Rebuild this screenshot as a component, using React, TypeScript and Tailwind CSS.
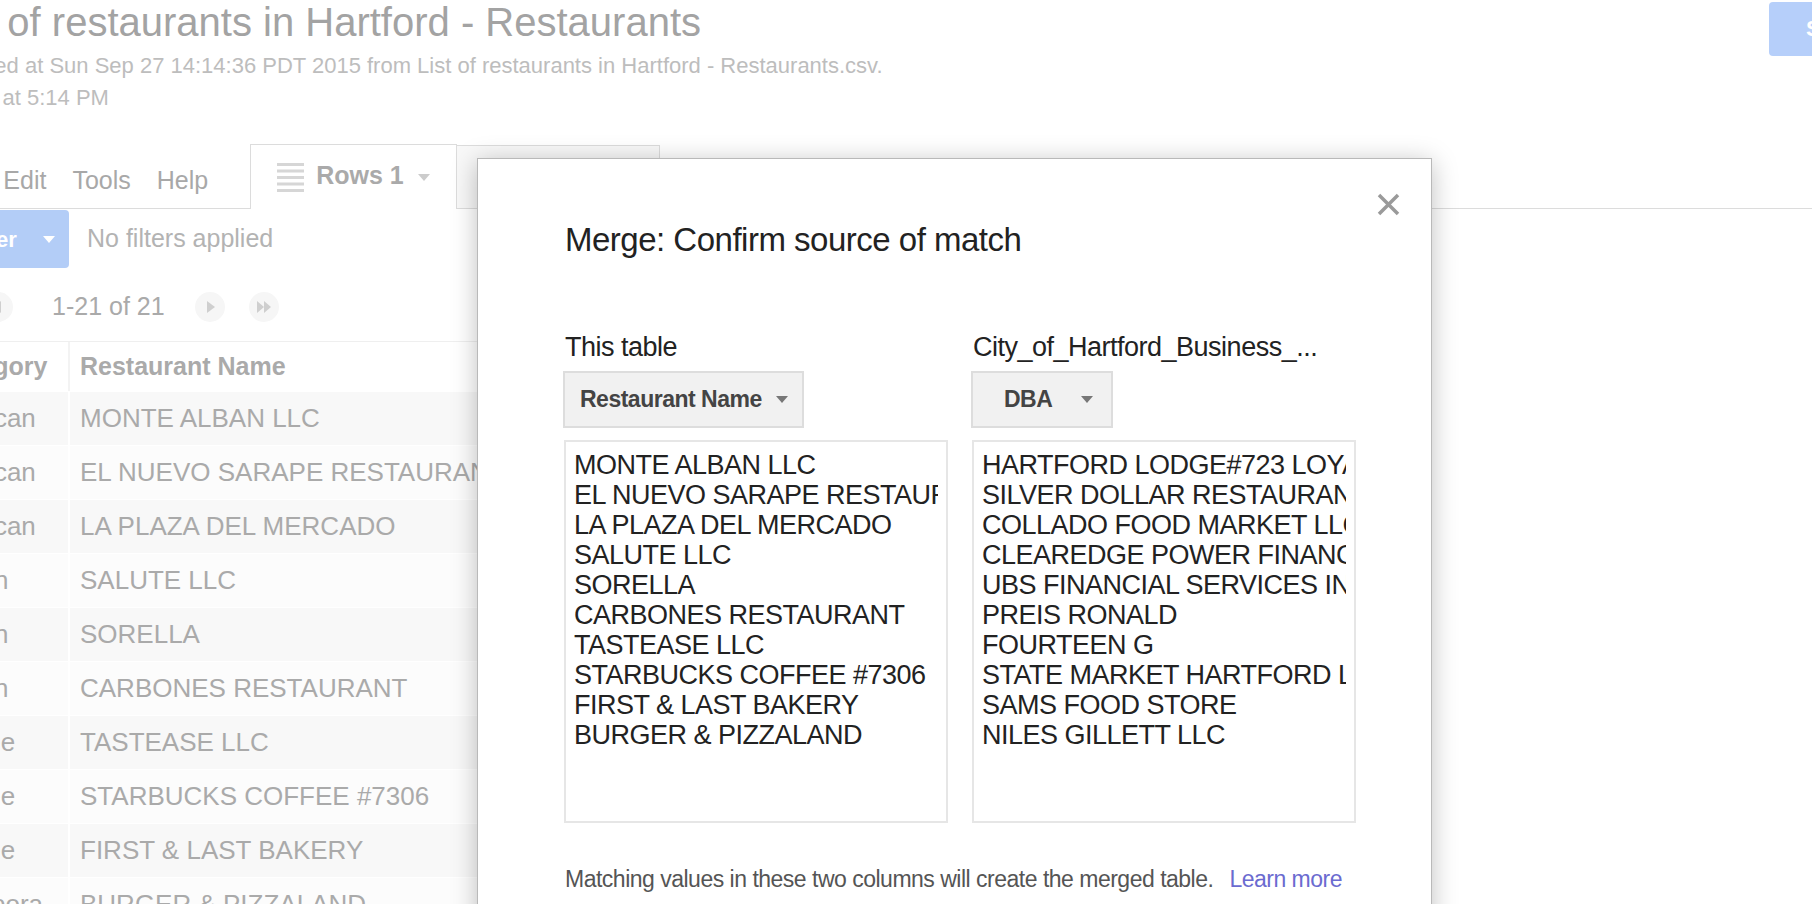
import React from 'react';

const tableRows = [
  ['Mexican', 'MONTE ALBAN LLC'],
  ['Mexican', 'EL NUEVO SARAPE RESTAURANT'],
  ['Mexican', 'LA PLAZA DEL MERCADO'],
  ['Italian', 'SALUTE LLC'],
  ['Italian', 'SORELLA'],
  ['Italian', 'CARBONES RESTAURANT'],
  ['Coffee', 'TASTEASE LLC'],
  ['Coffee', 'STARBUCKS COFFEE #7306'],
  ['Coffee', 'FIRST & LAST BAKERY'],
  ['Diaspora', 'BURGER & PIZZALAND'],
];

const leftValues = [
  'MONTE ALBAN LLC',
  'EL NUEVO SARAPE RESTAURANT',
  'LA PLAZA DEL MERCADO',
  'SALUTE LLC',
  'SORELLA',
  'CARBONES RESTAURANT',
  'TASTEASE LLC',
  'STARBUCKS COFFEE #7306',
  'FIRST & LAST BAKERY',
  'BURGER & PIZZALAND',
];

const rightValues = [
  'HARTFORD LODGE#723 LOYAL ORDER OF MOOSE',
  'SILVER DOLLAR RESTAURANT',
  'COLLADO FOOD MARKET LLC',
  'CLEAREDGE POWER FINANCE',
  'UBS FINANCIAL SERVICES INC',
  'PREIS RONALD',
  'FOURTEEN G',
  'STATE MARKET HARTFORD LLC',
  'SAMS FOOD STORE',
  'NILES GILLETT LLC',
];

function Caret({ color = '#777' }: { color?: string }) {
  return (
    <svg width="12" height="7" viewBox="0 0 12 7">
      <path d="M0 0 L12 0 L6 7 Z" fill={color} />
    </svg>
  );
}

function RowsIcon() {
  return (
    <svg width="27" height="29" viewBox="0 0 27 29">
      {[0, 6.5, 13, 19.5, 26].map((y) => (
        <rect key={y} x="0" y={y} width="27" height="3" fill="#d6d6d6" />
      ))}
    </svg>
  );
}

function PagerButton({ kind }: { kind: 'prev' | 'next' | 'last' }) {
  return (
    <div className="flex h-[30px] w-[30px] items-center justify-center rounded-full bg-[#f6f6f6]">
      <svg width="16" height="12" viewBox="0 0 16 12">
        {kind === 'prev' && <path d="M11 0 L11 12 L3 6 Z" fill="#cfcfcf" />}
        {kind === 'next' && <path d="M5 0 L5 12 L13 6 Z" fill="#cfcfcf" />}
        {kind === 'last' && (
          <>
            <path d="M1 0 L1 12 L8 6 Z" fill="#cfcfcf" />
            <path d="M8 0 L8 12 L15 6 Z" fill="#cfcfcf" />
          </>
        )}
      </svg>
    </div>
  );
}

function MatchColumn({
  label,
  field,
  values,
  buttonClass,
  caretGap,
}: {
  label: string;
  field: string;
  values: string[];
  buttonClass: string;
  caretGap: string;
}) {
  return (
    <div className="w-[384px]">
      <div className="pl-[1px] text-[27px] leading-[30px] tracking-[-0.5px] text-[#222]">{label}</div>
      <div
        className={`mt-[9px] -ml-px flex h-[57px] items-center border-2 border-[#dddddd] bg-[#f1f1f1] ${buttonClass}`}
      >
        <span className="text-[23px] font-bold tracking-[-0.5px] text-[#444]">{field}</span>
        <span className={caretGap}>
          <Caret />
        </span>
      </div>
      <div className="mt-[12px] h-[383px] border-2 border-[#e6e6e6] px-[8px] pt-[8px]">
        <div className="overflow-hidden">
          {values.map((v) => (
            <div key={v} className="whitespace-nowrap text-[27px] leading-[30px] tracking-[-0.5px] text-[#222]">
              {v}
            </div>
          ))}
        </div>
      </div>
    </div>
  );
}

export default function App() {
  return (
    <div className="relative h-[904px] w-[1812px] overflow-hidden bg-white font-['Liberation_Sans',Arial,sans-serif]">
      {/* page, scrolled sideways */}
      <div className="ml-[-61px] w-[1873px]">
        <div className="flex justify-between">
          <div>
            <h1 className="ml-[-5px] text-[40px] leading-[44px] text-[#a3a3a3]">
              List of restaurants in Hartford - Restaurants
            </h1>
            <p className="ml-[-7px] mt-[6px] text-[22px] leading-[32px] text-[#bdbdbd]">
              Imported at Sun Sep 27 14:14:36 PDT 2015 from List of restaurants in Hartford - Restaurants.csv.
            </p>
            <p className="ml-[-5px] text-[22px] leading-[32px] text-[#bdbdbd]">Edited at 5:14 PM</p>
          </div>
          <div className="mr-[-37px] mt-[2px] h-[54px] w-[80px] rounded-[4px] bg-[#b6cffa] pl-[37px] text-[22px] font-bold leading-[54px] text-white">
            Share
          </div>
        </div>

        {/* menu + tabs */}
        <div className="mt-[30px] flex h-[65px] items-start border-b border-[#dcdcdc]">
          <div className="ml-[-2px] mt-[21px] flex gap-[26px] text-[25px] leading-[30px] text-[#a8a8a8]">
            <span>File</span>
            <span>Edit</span>
            <span>Tools</span>
            <span>Help</span>
          </div>
          <div className="ml-[42px] flex h-[65px] w-[207px] items-start border border-b-0 border-[#dcdcdc] bg-white">
            <div className="ml-[26px] mt-[18px]">
              <RowsIcon />
            </div>
            <span className="ml-[12px] mt-[15px] text-[25px] font-bold leading-[30px] text-[#aaaaaa]">Rows 1</span>
            <span className="ml-[14px] mt-[29px]">
              <Caret color="#cccccc" />
            </span>
          </div>
          <div className="mt-[1px] h-[64px] w-[203px] border border-l-0 border-[#dcdcdc] bg-[#f8f8f8]" />
        </div>

        {/* filter row */}
        <div className="flex items-center pt-[1px]">
          <div className="flex h-[58px] w-[130px] items-center rounded-[4px] bg-[#b3cdf7] pl-[24px]">
            <span className="text-[22px] font-bold text-white">Filter</span>
            <span className="ml-[26px]">
              <Caret color="#ffffff" />
            </span>
          </div>
          <span className="ml-[18px] text-[25px] text-[#b3b3b3]">No filters applied</span>
        </div>

        {/* pager */}
        <div className="flex h-[73px] items-center pt-[5px]">
          <div className="ml-[44px]">
            <PagerButton kind="prev" />
          </div>
          <span className="ml-[39px] text-[25px] text-[#aaaaaa]">1-21 of 21</span>
          <div className="ml-[30px]">
            <PagerButton kind="next" />
          </div>
          <div className="ml-[24px]">
            <PagerButton kind="last" />
          </div>
        </div>

        {/* table */}
        <div className="w-[620px] border-t border-[#efefef]">
          <div className="flex h-[49px] items-center bg-white">
            <div className="w-[129px] text-[25px] font-bold text-[#aaaaaa]">Category</div>
            <div className="flex h-full flex-1 items-center border-l-2 border-[#f3f3f3] pl-[10px] text-[25px] font-bold text-[#aaaaaa]">
              Restaurant Name
            </div>
          </div>
          {tableRows.map(([cat, name], i) => (
            <div
              key={name}
              className={`flex h-[54px] items-center border-t border-white ${i % 2 === 0 ? 'bg-[#f8f8f8]' : 'bg-[#fcfcfc]'}`}
            >
              <div className="w-[129px] whitespace-nowrap text-[26px] text-[#aaaaaa]">{cat}</div>
              <div className="flex h-full flex-1 items-center whitespace-nowrap border-l-2 border-white pl-[10px] text-[26px] text-[#aaaaaa]">
                {name}
              </div>
            </div>
          ))}
        </div>
      </div>

      {/* merge dialog */}
      <div className="absolute left-[477px] top-[158px] h-[780px] w-[955px] border border-[#b9b9b9] bg-white shadow-[0_4px_24px_rgba(0,0,0,0.25)]">
        <button className="absolute right-[31px] top-[34px]">
          <svg width="23" height="23" viewBox="0 0 23 23">
            <path d="M2 2 L21 21 M21 2 L2 21" stroke="#9a9a9a" strokeWidth="3.5" />
          </svg>
        </button>
        <div className="pl-[86px] pt-[62px]">
          <h2 className="ml-[1px] text-[33px] leading-[38px] tracking-[-0.5px] text-[#222]">
            Merge: Confirm source of match
          </h2>
          <div className="mt-[73px] flex gap-[24px]">
            <MatchColumn
              label="This table"
              field="Restaurant Name"
              values={leftValues}
              buttonClass="w-[241px] pl-[15px]"
              caretGap="ml-[14px]"
            />
            <MatchColumn
              label="City_of_Hartford_Business_..."
              field="DBA"
              values={rightValues}
              buttonClass="w-[142px] pl-[31px]"
              caretGap="ml-[29px]"
            />
          </div>
          <p className="ml-[1px] mt-[42px] text-[23px] leading-[28px] tracking-[-0.5px] text-[#555]">
            Matching values in these two columns will create the merged table.
            <a className="ml-[16px] text-[#6b6bd0]">Learn more</a>
          </p>
        </div>
      </div>
    </div>
  );
}
